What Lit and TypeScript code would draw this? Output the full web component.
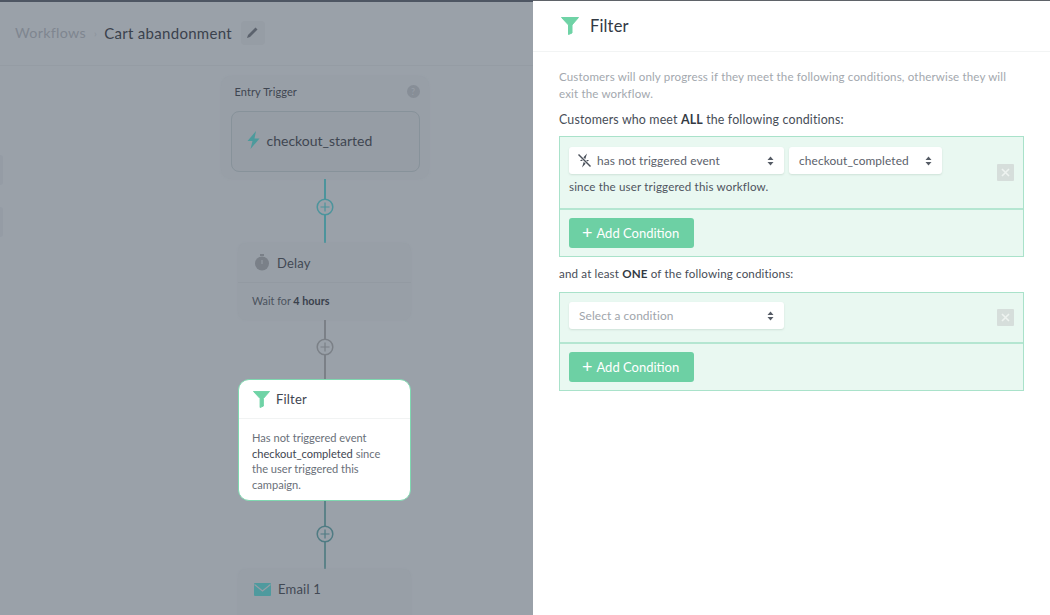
import { LitElement, html, css } from "lit";
import { customElement } from "lit/decorators.js";

const funnel = (w: number, h: number) => html`<svg width=${w} height=${h} viewBox="0 0 18 18"><path d="M0.5 0.5H17.5L11 8V16L7.5 17.5V8Z" fill="#6fd3a6" stroke="#6fd3a6" stroke-linejoin="round"/></svg>`;

const plus = (color: string) => html`<svg class="plus" width="18" height="18" viewBox="0 0 18 18">
  <circle cx="9" cy="9" r="7.8" fill="#9aa1a9" stroke=${color} stroke-width="1.5"/>
  <path d="M9 4.5V13.5M4.5 9H13.5" stroke=${color} stroke-width="1.2"/>
</svg>`;

const arrows = html`<svg class="arrows" width="7" height="10" viewBox="0 0 7 10"><path d="M3.5 0.5L6.5 4H0.5Z M0.5 6H6.5L3.5 9.5Z" fill="#555b65"/></svg>`;

const closeBtn = html`<span class="close"><svg width="17" height="17" viewBox="0 0 17 17"><rect width="17" height="17" rx="1" fill="#d6dedb"/><path d="M5 5L12 12M12 5L5 12" stroke="#eef3f0" stroke-width="1.6"/></svg></span>`;

const addButton = html`<button class="add"><span class="add-plus">+</span>Add Condition</button>`;

@customElement("app-root")
export class AppRoot extends LitElement {
  static styles = css`
    :host {
      display: flex;
      width: 1050px;
      height: 615px;
      overflow: hidden;
      font-family: Lato, "Open Sans", sans-serif;
      color: #3f4651;
    }
    .left {
      position: relative;
      width: 533px;
      flex: none;
      box-sizing: border-box;
      background: #9aa1a9;
      border-top: 2px solid #4e5663;
      overflow: hidden;
    }
    .crumbs {
      height: 64px;
      box-sizing: border-box;
      padding: 0 15px 2px;
      display: flex;
      align-items: center;
      font-size: 15px;
      letter-spacing: 0.3px;
      border-bottom: 1px solid #959ca4;
    }
    .crumbs .muted { color: #7f8690; font-size: 14.3px; }
    .crumbs .sep { color: #8b929b; margin: 0 7px 0 8px; font-size: 10px; }
    .crumbs .name { color: #3b424d; }
    .edit {
      margin-left: 9px;
      width: 24px;
      height: 24px;
      border-radius: 4px;
      background: #969da5;
      display: flex;
      align-items: center;
      justify-content: center;
    }
    .tab {
      position: absolute;
      left: 0;
      width: 3px;
      background: #959ca5;
      border-radius: 0 3px 3px 0;
    }
    .tab.one { top: 153px; height: 30px; }
    .tab.two { top: 205px; height: 30px; }
    .flow {
      display: flex;
      flex-direction: column;
      align-items: center;
      padding: 10px 0 0 116px;
    }
    .trigger {
      width: 208px;
      height: 103px;
      box-sizing: border-box;
      padding: 7px 9px 6px 10px;
      border-radius: 10px;
      background: #989fa7;
      box-shadow: 0 0 2px #969da5;
    }
    .trigger-head {
      display: flex;
      justify-content: space-between;
      align-items: center;
      margin-left: 4px;
      height: 17px;
      font-size: 11px;
      letter-spacing: 0.1px;
      color: #3f4651;
    }
    .help {
      width: 13px;
      height: 13px;
      border-radius: 50%;
      background: #878e97;
      color: #989fa7;
      font-size: 9px;
      line-height: 13px;
      text-align: center;
    }
    .trigger-box {
      margin-top: 11px;
      width: 189px;
      height: 61px;
      box-sizing: border-box;
      border: 1px solid #87929a;
      border-radius: 8px;
      background: #969da5;
      display: flex;
      align-items: center;
      gap: 7px;
      padding: 0 0 3px 15px;
      font-size: 14px;
    }
    .link {
      width: 2px;
      flex: none;
      display: flex;
      justify-content: center;
      align-items: flex-start;
    }
    .plus { flex: none; }
    .link.first { height: 64px; background: #4c949c; }
    .link.first .plus { margin-top: 19px; }
    .link.second { height: 59px; background: #7b8087; }
    .link.second .plus { margin-top: 18px; }
    .link.third { height: 68px; background: #5c8288; }
    .link.third .plus { margin-top: 24px; }
    .node {
      width: 173px;
      box-sizing: border-box;
      border-radius: 8px;
      background: #989fa7;
      box-shadow: 0 0 2px #969da5;
      flex: none;
    }
    .node-head {
      height: 40px;
      box-sizing: border-box;
      display: flex;
      align-items: center;
      gap: 7px;
      padding-left: 16px;
      font-size: 13px;
      color: #424954;
      letter-spacing: 0.2px;
      border-bottom: 1px solid #939aa2;
    }
    .node-body {
      padding: 10px 14px;
      font-size: 10.8px;
      line-height: 15.5px;
      color: #4b525d;
    }
    .node-body b { color: #3a414c; }
    .node.delay { height: 77px; }
    .node.email { height: 60px; }
    .node.email .node-head { border: 0; }
    .node.active {
      height: 122px;
      background: #fff;
      border: 1px solid #7fd8b0;
      border-radius: 11px;
      box-shadow: none;
    }
    .node.active .node-head {
      height: 39px;
      gap: 6px;
      padding-left: 14px;
      color: #3f4651;
      border-bottom-color: #f1f3f3;
    }
    .node.active .node-body {
      padding: 11px 13px;
      font-size: 11.1px;
      color: #6a7079;
    }
    .node.active .node-body div { white-space: nowrap; }
    .node.active .node-body span { color: #3f4651; }

    .panel {
      flex: 1;
      background: #fff;
      border-top: 1px solid #5f6369;
      font-size: 12.4px;
      letter-spacing: 0.15px;
    }
    .panel-head {
      height: 51px;
      box-sizing: border-box;
      display: flex;
      align-items: center;
      gap: 11px;
      padding-left: 28px;
      font-size: 16.5px;
      color: #333a44;
      border-bottom: 1px solid #f2f4f4;
    }
    .panel-body { padding: 16px 26px 0; }
    .desc { margin: 0; color: #a3a8ae; font-size: 11.55px; line-height: 17px; }
    .lead { margin: 0; height: 17px; line-height: 17px; color: #474d57; }
    .lead b { color: #333a44; }
    .lead.first { margin-top: 9px; }
    .lead.second { margin-top: 8px; font-size: 11.6px; }
    .group {
      margin-top: 8px;
      border: 1px solid #a9e2ca;
      background: #e9f8f1;
    }
    .group.below { margin-top: 10px; }
    .row {
      position: relative;
      box-sizing: border-box;
      padding: 10px 9px 0;
      border-bottom: 2px solid #b4e6d1;
    }
    .row.a { height: 73px; }
    .row.b { height: 51px; padding-top: 9px; }
    .close { position: absolute; right: 9px; top: 27px; display: flex; }
    .row.b .close { top: 16px; }
    .selects { display: flex; gap: 5px; }
    .select {
      height: 27px;
      box-sizing: border-box;
      display: flex;
      align-items: center;
      padding: 0 10px;
      background: #fff;
      border-radius: 3px;
      box-shadow: 0 1px 2px rgba(90, 120, 105, 0.18);
      color: #5b616b;
      font-size: 11.9px;
      letter-spacing: 0.1px;
    }
    .select .label { flex: 1; padding-bottom: 1px; }
    .select.ph { color: #a0a5ab; }
    .select.wide { width: 215px; }
    .select.narrow { width: 153px; }
    .select svg.off { margin: 0 5px 0 -2px; }
    .since { margin-top: 5px; line-height: 15px; font-size: 11.6px; color: #4f555f; }
    .foot { height: 46px; box-sizing: border-box; padding: 8px 9px; }
    .add {
      width: 125px;
      height: 30px;
      padding: 0 0 0 13px;
      display: flex;
      align-items: center;
      border: 0;
      border-radius: 3px;
      background: #6dd0a4;
      color: #fff;
      font: inherit;
      font-size: 13px;
    }
    .add-plus { font-size: 18px; line-height: 18px; margin: -3px 4px 0 0; }
  `;

  render() {
    return html`
      <div class="left">
        <div class="crumbs">
          <span class="muted">Workflows</span><span class="sep">›</span><span class="name">Cart abandonment</span>
          <span class="edit"><svg width="13" height="13" viewBox="0 0 13 13"><path d="M1 12L2 9L9.5 1.5L11.5 3.5L4 11Z" fill="#5b626d"/></svg></span>
        </div>
        <i class="tab one"></i><i class="tab two"></i>
        <div class="flow">
          <div class="trigger">
            <div class="trigger-head"><span>Entry Trigger</span><span class="help">?</span></div>
            <div class="trigger-box">
              <svg width="13" height="18" viewBox="0 0 13 18"><path d="M9 0L0.5 10H5.5L3.5 18L12.5 7.5H7.5Z" fill="#4c9a9c"/></svg>
              <span>checkout_started</span>
            </div>
          </div>
          <div class="link first">${plus("#4c949c")}</div>
          <div class="node delay">
            <div class="node-head">
              <svg width="16" height="17" viewBox="0 0 16 17"><rect x="6" y="0" width="4" height="2" fill="#7a8088"/><circle cx="8" cy="9.5" r="7" fill="#7a8088"/><path d="M8 6V10" stroke="#979ea6"/></svg>
              <span>Delay</span>
            </div>
            <div class="node-body">Wait for <b>4 hours</b></div>
          </div>
          <div class="link second">${plus("#7b8087")}</div>
          <div class="node active">
            <div class="node-head">${funnel(17, 17)}<span>Filter</span></div>
            <div class="node-body">
              <div>Has not triggered event</div>
              <div><span>checkout_completed</span> since</div>
              <div>the user triggered this</div>
              <div>campaign.</div>
            </div>
          </div>
          <div class="link third">${plus("#4f7b83")}</div>
          <div class="node email">
            <div class="node-head">
              <svg width="17" height="13" viewBox="0 0 17 13"><rect width="17" height="13" rx="1" fill="#4f9a9e"/><path d="M0.5 1.5L8.5 8L16.5 1.5" fill="none" stroke="#979ea6" stroke-width="1.2"/></svg>
              <span>Email 1</span>
            </div>
          </div>
        </div>
      </div>
      <div class="panel">
        <div class="panel-head">${funnel(18, 18)}<span>Filter</span></div>
        <div class="panel-body">
          <p class="desc">Customers will only progress if they meet the following conditions, otherwise they will exit the workflow.</p>
          <p class="lead first">Customers who meet <b>ALL</b> the following conditions:</p>
          <div class="group">
            <div class="row a">
              <div class="selects">
                <div class="select wide">
                  <svg class="off" width="15" height="15" viewBox="0 0 15 15">
                    <path d="M10 0.5L3 8H7L5 14.5L12 7H8Z" fill="#4a505a"/>
                    <path d="M1.5 1.5L13.5 13.5" stroke="#fff" stroke-width="3"/>
                    <path d="M1.5 1.5L13.5 13.5" stroke="#4a505a" stroke-width="1.4"/>
                  </svg>
                  <span class="label">has not triggered event</span>${arrows}
                </div>
                <div class="select narrow"><span class="label">checkout_completed</span>${arrows}</div>
              </div>
              <div class="since">since the user triggered this workflow.</div>
              ${closeBtn}
            </div>
            <div class="foot">${addButton}</div>
          </div>
          <p class="lead second">and at least <b>ONE</b> of the following conditions:</p>
          <div class="group below">
            <div class="row b">
              <div class="selects"><div class="select wide ph"><span class="label">Select a condition</span>${arrows}</div></div>
              ${closeBtn}
            </div>
            <div class="foot">${addButton}</div>
          </div>
        </div>
      </div>
    `;
  }
}
